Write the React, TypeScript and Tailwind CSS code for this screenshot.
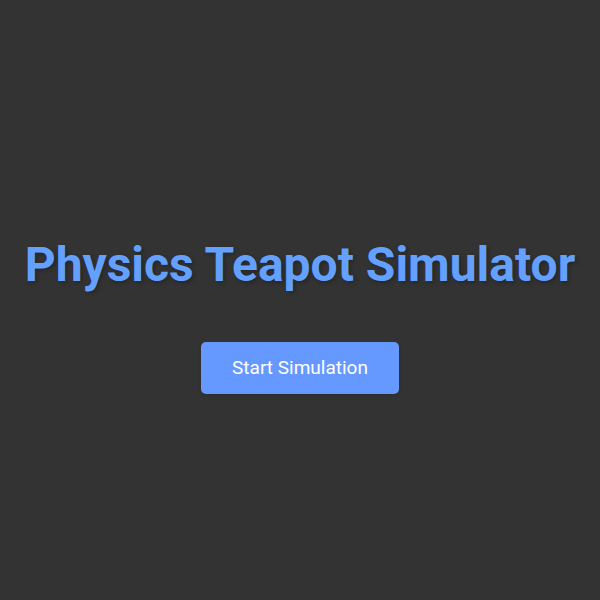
export default function App() {
  return (
    <div
      className="h-screen w-full bg-[#333333] flex flex-col items-center justify-center pt-[30px]"
      style={{ fontFamily: 'Roboto, "Noto Sans", sans-serif' }}
    >
      <h1 className="text-[48px] leading-[1.2] font-bold text-[#64a0ff] [text-shadow:2px_2px_4px_rgba(0,0,0,0.25)]">
        Physics Teapot Simulator
      </h1>
      <button className="mt-[48px] w-[198px] h-[52px] rounded-[5px] bg-[#6699ff] text-white text-[19px] shadow-[0_2px_4px_rgba(0,0,0,0.15)]">
        Start Simulation
      </button>
    </div>
  );
}
